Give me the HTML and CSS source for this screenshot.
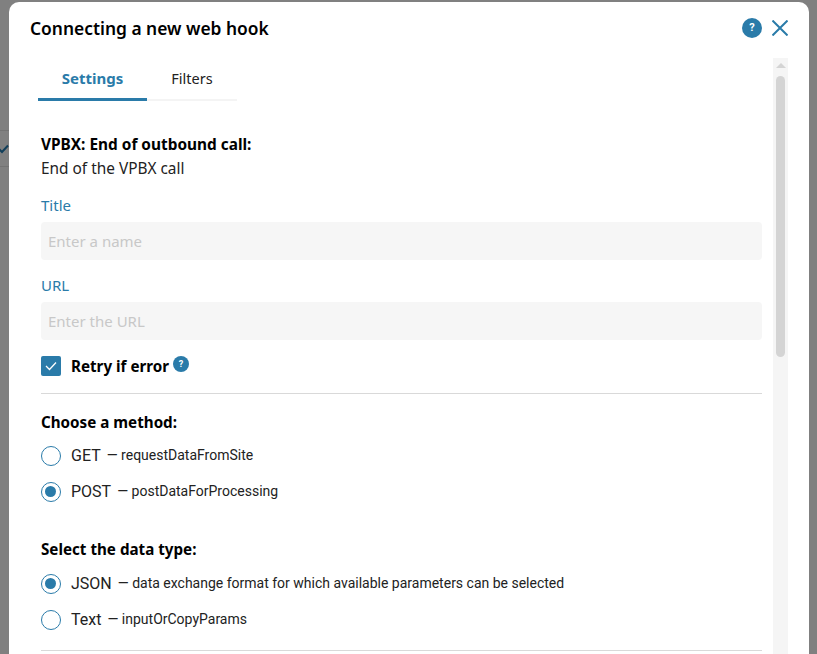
FILE: index.html
```html
<!DOCTYPE html>
<html lang="en">
<head>
    <meta charset="UTF-8">
    <meta name="viewport" content="width=device-width, initial-scale=1.0">
    <title>Connecting a new web hook</title>
    <link rel="stylesheet" href="styles.css">
</head>
<body>

<div class="page-behind">
    <div class="behind-row">
        <svg class="behind-check" width="9" height="10" viewBox="0 0 9 10"><path d="M-1 5 L2 8 L8 1.5" fill="none" stroke="#123f5a" stroke-width="2"/></svg>
    </div>
</div>

<div class="modal">
    <div class="modal-header">
        <h2 class="modal-title">Connecting a new web hook</h2>
        <div class="modal-actions">
            <span class="help help-big">?</span>
            <svg class="close" width="16" height="16" viewBox="0 0 16 16"><path d="M0.5 0.5 L15.5 15.5 M15.5 0.5 L0.5 15.5" fill="none" stroke="#2a7ba9" stroke-width="2"/></svg>
        </div>
    </div>

    <div class="modal-body">
        <div class="content">
            <div class="tabs">
                <div class="tab tab-active">Settings</div>
                <div class="tab">Filters</div>
            </div>

            <div class="event">
                <p class="event-name">VPBX: End of outbound call:</p>
                <p class="event-desc">End of the VPBX call</p>
            </div>

            <label class="field-label field-first">Title</label>
            <input type="text" class="text-input" placeholder="Enter a name">

            <label class="field-label">URL</label>
            <input type="text" class="text-input" placeholder="Enter the URL">

            <div class="retry">
                <span class="checkbox">
                    <svg width="12" height="10" viewBox="0 0 12 10"><path d="M1 5 L4.5 8.5 L11 1.5" fill="none" stroke="#fff" stroke-width="1.3"/></svg>
                </span>
                <span class="retry-text">Retry if error</span>
                <span class="help help-small">?</span>
            </div>

            <hr class="divider">

            <h3 class="group-title">Choose a method:</h3>
            <div class="radio-row"><span class="radio"></span><span class="radio-name">GET</span><span class="radio-note">— requestDataFromSite</span></div>
            <div class="radio-row"><span class="radio radio-on"></span><span class="radio-name">POST</span><span class="radio-note">— postDataForProcessing</span></div>

            <h3 class="group-title group-second">Select the data type:</h3>
            <div class="radio-row"><span class="radio radio-on"></span><span class="radio-name">JSON</span><span class="radio-note">— data exchange format for which available parameters can be selected</span></div>
            <div class="radio-row"><span class="radio"></span><span class="radio-name">Text</span><span class="radio-note">— inputOrCopyParams</span></div>

            <hr class="divider divider-last">
        </div>

        <div class="scrollbar">
            <div class="scroll-up"></div>
            <div class="scroll-thumb"></div>
        </div>
    </div>
</div>

</body>
</html>
```

FILE: styles.css
```css
html, body {
    height: 100%;
}
body {
    font-family: "Noto Sans", sans-serif;
    background: #808080;
    margin: 0;
    display: flex;
    overflow: hidden;
    color: #000;
}
.page-behind {
    width: 9px;
    flex-shrink: 0;
    padding-top: 130px;
    box-sizing: border-box;
}
.behind-row {
    height: 37px;
    border-top: 1px solid #737373;
    border-bottom: 1px solid #737373;
    box-sizing: border-box;
    padding-top: 13px;
}
.behind-check {
    display: block;
}
.modal {
    width: 800px;
    flex-shrink: 0;
    margin-top: 2px;
    background: #fff;
    border-radius: 10px 10px 0 0;
    height: 652px;
    overflow: hidden;
}
.modal-header {
    display: flex;
    justify-content: space-between;
    align-items: center;
    height: 52px;
    padding: 0 21px;
}
.modal-title {
    margin: 0;
    font-size: 17.4px;
    font-weight: 600;
    line-height: 52px;
}
.modal-actions {
    display: flex;
    align-items: center;
    gap: 10px;
}
.help {
    display: block;
    border-radius: 50%;
    background: #2a7ba9;
    color: #fff;
    font-family: Roboto, sans-serif;
    font-weight: 700;
    text-align: center;
}
.help-big {
    width: 20px;
    height: 20px;
    line-height: 20px;
    font-size: 11px;
}
.help-small {
    width: 16px;
    height: 16px;
    line-height: 16px;
    font-size: 9px;
    margin: -4px 0 0 4px;
}
.close {
    display: block;
}
.modal-body {
    display: flex;
    height: 600px;
    padding-top: 4px;
    box-sizing: border-box;
}
.content {
    width: 721px;
    margin-left: 32px;
    flex-shrink: 0;
}
.tabs {
    display: flex;
    width: 199px;
    margin-left: -3px;
    border-bottom: 2px solid #f4f4f4;
}
.tab {
    height: 41px;
    margin-bottom: -2px;
    line-height: 41px;
    font-size: 14.5px;
    text-align: center;
    width: 90px;
    color: #222;
}
.tab-active {
    width: 109px;
    font-size: 15px;
    font-weight: 700;
    color: #2a7ba9;
    border-bottom: 3px solid #2a7ba9;
    box-sizing: border-box;
    height: 43px;
}
.event {
    margin-top: 32px;
    font-size: 15.4px;
    line-height: 24px;
}
.event p {
    margin: 0;
}
.event-name {
    font-weight: 700;
}
.event-desc {
    color: #222;
}
.field-label {
    display: block;
    margin-top: 13px;
    font-size: 15px;
    line-height: 24px;
    color: #2a7ba9;
}
.field-first {
    margin-top: 12px;
}
.field-label + .text-input {
    margin-top: 5px;
}
.text-input {
    display: block;
    width: 100%;
    height: 38px;
    box-sizing: border-box;
    padding: 0 7px;
    border: none;
    border-radius: 4px;
    outline: none;
    background: #f6f6f6;
    font-family: "Noto Sans", sans-serif;
    font-size: 15px;
}
.text-input::placeholder {
    color: #c8c8c8;
}
.retry {
    display: flex;
    align-items: center;
    margin-top: 16px;
    height: 20px;
}
.checkbox {
    width: 20px;
    height: 20px;
    border-radius: 2px;
    background: #2a7ba9;
    display: flex;
    align-items: center;
    justify-content: center;
}
.retry-text {
    margin-left: 10px;
    font-size: 15.2px;
    font-weight: 700;
}
.divider {
    margin: 17px 0 0;
    border: none;
    border-top: 1px solid #d9d9d9;
}
.group-title {
    margin: 16px 0 0;
    font-size: 15.2px;
    font-weight: 700;
    line-height: 24px;
}
.group-second {
    margin-top: 36px;
}
.radio-row {
    display: flex;
    align-items: center;
    height: 20px;
    margin-top: 16px;
    font-family: Roboto, sans-serif;
    color: #222;
}
.group-title + .radio-row {
    margin-top: 11px;
}
.group-second + .radio-row {
    margin-top: 12px;
}
.radio {
    width: 20px;
    height: 20px;
    margin-top: 2px;
    box-sizing: border-box;
    border: 1.5px solid #2a7ba9;
    border-radius: 50%;
    position: relative;
}
.radio-on::after {
    content: "";
    position: absolute;
    left: 3px;
    top: 3px;
    width: 11px;
    height: 11px;
    border-radius: 50%;
    background: #2a7ba9;
}
.radio-name {
    margin-left: 10px;
    font-size: 16px;
}
.radio-note {
    margin-left: 6px;
    font-size: 14px;
}
.divider-last {
    margin-top: 21px;
}
.scrollbar {
    width: 15px;
    margin-left: 11px;
    background: #f5f5f5;
    position: relative;
    flex-shrink: 0;
}
.scroll-up {
    position: absolute;
    left: 3px;
    top: 5px;
    border-left: 5px solid transparent;
    border-right: 5px solid transparent;
    border-bottom: 5px solid #d4d4d4;
}
.scroll-thumb {
    position: absolute;
    left: 3px;
    top: 18px;
    width: 9px;
    height: 281px;
    border-radius: 5px;
    background: #d4d4d4;
}
```
